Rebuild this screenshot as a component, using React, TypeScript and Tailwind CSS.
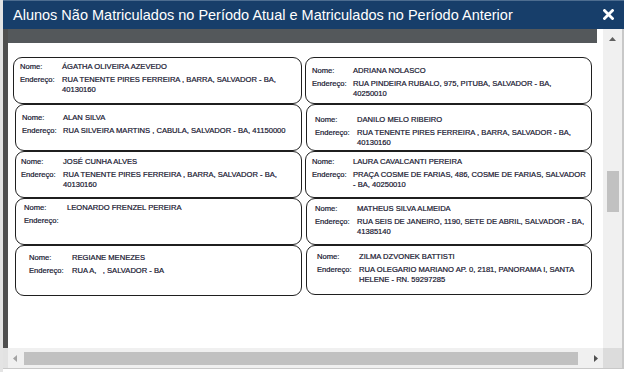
type Card = {
  name: string
  addr: string[]
  box: string
  pad: string
  lw: string
}

const left: Card[] = [
  {
    name: 'ÁGATHA OLIVEIRA AZEVEDO',
    addr: ['RUA TENENTE PIRES FERREIRA , BARRA, SALVADOR - BA,', '40130160'],
    box: 'h-[47px]',
    pad: 'pl-[6px] pt-[4px]',
    lw: 'w-[42px]',
  },
  {
    name: 'ALAN SILVA',
    addr: ['RUA SILVEIRA MARTINS , CABULA, SALVADOR - BA, 41150000'],
    box: 'h-[47px] ml-[2px]',
    pad: 'pl-[6px] pt-[8px]',
    lw: 'w-[41px]',
  },
  {
    name: 'JOSÉ CUNHA ALVES',
    addr: ['RUA TENENTE PIRES FERREIRA , BARRA, SALVADOR - BA,', '40130160'],
    box: 'h-[47px] ml-[2px]',
    pad: 'pl-[5px] pt-[5px]',
    lw: 'w-[42px]',
  },
  {
    name: 'LEONARDO FRENZEL PEREIRA',
    addr: [''],
    box: 'h-[47px] ml-[2px]',
    pad: 'pl-[8px] pt-[4px]',
    lw: 'w-[43px]',
  },
  {
    name: 'REGIANE MENEZES',
    addr: ['RUA A,   , SALVADOR - BA'],
    box: 'h-[51px] ml-[2px]',
    pad: 'pl-[13px] pt-[7px]',
    lw: 'w-[43px]',
  },
]

const right: Card[] = [
  {
    name: 'ADRIANA NOLASCO',
    addr: ['RUA PINDEIRA RUBALO, 975, PITUBA, SALVADOR - BA,', '40250010'],
    box: 'h-[47px]',
    pad: 'pl-[6px] pt-[8px]',
    lw: 'w-[41px]',
  },
  {
    name: 'DANILO MELO RIBEIRO',
    addr: ['RUA TENENTE PIRES FERREIRA , BARRA, SALVADOR - BA,', '40130160'],
    box: 'h-[47px] ml-[1px]',
    pad: 'pl-[8px] pt-[10px]',
    lw: 'w-[42px]',
  },
  {
    name: 'LAURA CAVALCANTI PEREIRA',
    addr: ['PRAÇA COSME DE FARIAS, 486, COSME DE FARIAS, SALVADOR', '- BA, 40250010'],
    box: 'h-[47px]',
    pad: 'pl-[6px] pt-[5px]',
    lw: 'w-[41px]',
  },
  {
    name: 'MATHEUS SILVA ALMEIDA',
    addr: ['RUA SEIS DE JANEIRO, 1190, SETE DE ABRIL, SALVADOR - BA,', '41385140'],
    box: 'h-[47px] ml-[1px]',
    pad: 'pl-[8px] pt-[5px]',
    lw: 'w-[42px]',
  },
  {
    name: 'ZILMA DZVONEK BATTISTI',
    addr: ['RUA OLEGARIO MARIANO AP. 0, 2181, PANORAMA I, SANTA', 'HELENE - RN. 59297285'],
    box: 'h-[50px] ml-[1px]',
    pad: 'pl-[10px] pt-[6px]',
    lw: 'w-[42px]',
  },
]

function StudentCard({ c }: { c: Card }) {
  return (
    <div
      className={`${c.box} ${c.pad} rounded-[9px] border-[1.5px] border-[#1f1f1f] bg-white text-[7.6px] leading-[10px] text-[#14142e] [-webkit-text-stroke:0.2px_#14142e]`}
    >
      <div className="flex">
        <span className={`${c.lw} shrink-0`}>Nome:</span>
        <span className="whitespace-pre">{c.name}</span>
      </div>
      <div className="mt-[3px] flex">
        <span className={`${c.lw} shrink-0`}>Endereço:</span>
        <div>
          {c.addr.map((l, i) => (
            <div key={i} className="whitespace-pre">
              {l}
            </div>
          ))}
        </div>
      </div>
    </div>
  )
}

export default function App() {
  return (
    <div className="flex h-[372px] w-[628px] overflow-hidden bg-white font-['Liberation_Sans',Arial,sans-serif]">
      <div className="w-[3px] shrink-0 bg-[#e4e4e4]" />
      <div className="flex w-[621px] shrink-0 flex-col">
        {/* title bar */}
        <div className="flex h-[29px] shrink-0 items-center justify-between border-t border-[#4d6d90] bg-[#173e6a] pl-[10px] pr-[10px] text-white">
          <span className="text-[14.5px] leading-none">
            Alunos Não Matriculados no Período Atual e Matriculados no Período Anterior
          </span>
          <svg width="11" height="11" viewBox="0 0 11 11" className="mb-[1px]">
            <path d="M1.5 1.5 L9.5 9.5 M9.5 1.5 L1.5 9.5" stroke="white" strokeWidth="2.8" strokeLinecap="square" />
          </svg>
        </div>

        {/* body */}
        <div className="flex h-[319px] shrink-0">
          <div className="w-[5px] shrink-0 bg-[#4f4f4f]" />
          <div className="flex w-[595px] shrink-0 flex-col bg-white">
            <div className="mr-[6px] h-[14px] shrink-0 bg-[#54585b]" />
            <div className="flex gap-[3px] pl-[5px] pt-[14px]">
              <div className="flex w-[289px] flex-col">
                {left.map((c) => (
                  <StudentCard key={c.name} c={c} />
                ))}
              </div>
              <div className="flex w-[287px] flex-col">
                {right.map((c) => (
                  <StudentCard key={c.name} c={c} />
                ))}
              </div>
            </div>
          </div>
          <div className="flex w-[19px] shrink-0 flex-col items-center bg-[#f0f0f0]">
            <div className="flex h-[20px] items-center justify-center">
              <svg width="7" height="4" viewBox="0 0 7 4">
                <polygon points="3.5,0 7,4 0,4" fill="#606060" />
              </svg>
            </div>
            <div className="mt-[122px] h-[41px] w-[12px] bg-[#c1c1c1]" />
          </div>
          <div className="w-[2px] shrink-0 bg-[#c8c8c8]" />
        </div>

        {/* horizontal scrollbar */}
        <div className="flex h-[20px] shrink-0">
          <div className="w-[5px] shrink-0 bg-[#e2e2e2]" />
          <div className="flex w-[595px] shrink-0 items-center bg-[#f0f0f0]">
            <div className="flex w-[14px] justify-center">
              <svg width="4" height="7" viewBox="0 0 4 7">
                <polygon points="0,3.5 4,0 4,7" fill="#a3a3a3" />
              </svg>
            </div>
            <div className="ml-[2px] mr-[10px] h-[13px] flex-1 bg-[#c1c1c1]" />
            <div className="flex w-[15px] justify-center">
              <svg width="4" height="7" viewBox="0 0 4 7">
                <polygon points="4,3.5 0,0 0,7" fill="#505050" />
              </svg>
            </div>
          </div>
          <div className="w-[19px] shrink-0 bg-[#dcdcdc]" />
          <div className="w-[2px] shrink-0 bg-[#c8c8c8]" />
        </div>
        <div className="h-[1px] shrink-0 bg-[#c8c8c8]" />
        <div className="flex-1 bg-white" />
      </div>
      <div className="flex-1 bg-white" />
    </div>
  )
}
